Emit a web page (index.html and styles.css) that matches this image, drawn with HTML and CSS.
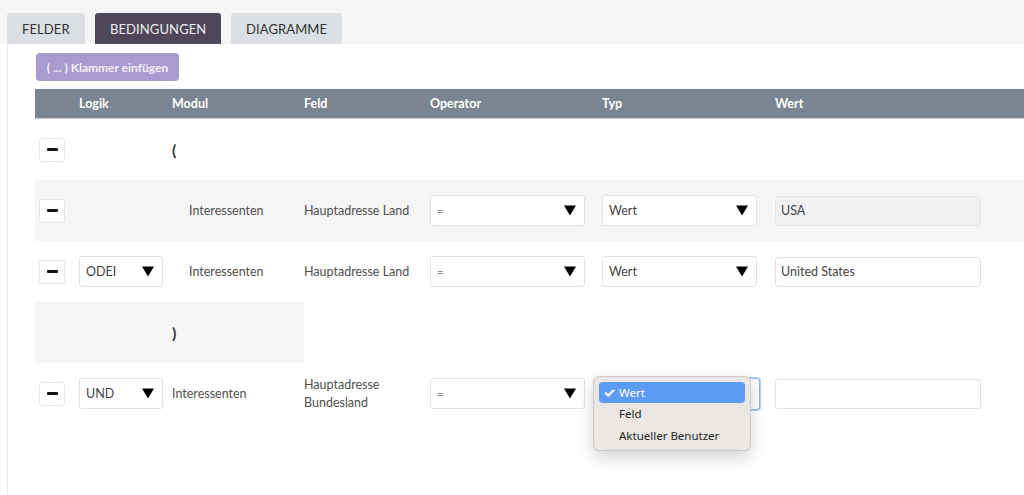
FILE: index.html
```html
<!DOCTYPE html>
<html lang="de">
<head>
<meta charset="utf-8">
<title>Bedingungen</title>
<link rel="stylesheet" href="styles.css">
</head>
<body>
<div class="page">
  <nav class="tabs">
    <div class="tab">FELDER</div>
    <div class="tab active">BEDINGUNGEN</div>
    <div class="tab">DIAGRAMME</div>
  </nav>
  <section class="panel">
    <div class="toolbar"><button class="btn-bracket">( ... ) Klammer einfügen</button></div>
    <div class="grid head">
      <div></div><div>Logik</div><div>Modul</div><div>Feld</div><div>Operator</div><div>Typ</div><div>Wert</div>
    </div>

    <div class="grid row">
      <div><span class="minus"><i></i></span></div>
      <div></div>
      <div class="paren">(</div>
      <div></div><div></div><div></div><div></div>
    </div>

    <div class="grid row shaded">
      <div><span class="minus"><i></i></span></div>
      <div></div>
      <div class="indent">Interessenten</div>
      <div>Hauptadresse Land</div>
      <div><span class="select op">=<svg class="tri" viewBox="0 0 12 10"><path d="M0 0H12L6 10Z"/></svg></span></div>
      <div><span class="select typ">Wert<svg class="tri" viewBox="0 0 12 10"><path d="M0 0H12L6 10Z"/></svg></span></div>
      <div><span class="input disabled">USA</span></div>
    </div>

    <div class="grid row">
      <div><span class="minus"><i></i></span></div>
      <div><span class="select logic">ODEI<svg class="tri" viewBox="0 0 12 10"><path d="M0 0H12L6 10Z"/></svg></span></div>
      <div class="indent">Interessenten</div>
      <div>Hauptadresse Land</div>
      <div><span class="select op">=<svg class="tri" viewBox="0 0 12 10"><path d="M0 0H12L6 10Z"/></svg></span></div>
      <div><span class="select typ">Wert<svg class="tri" viewBox="0 0 12 10"><path d="M0 0H12L6 10Z"/></svg></span></div>
      <div><span class="input">United States</span></div>
    </div>

    <div class="grid row close">
      <div class="closebg"><span></span><span></span><span class="paren">)</span></div>
    </div>

    <div class="grid row">
      <div><span class="minus"><i></i></span></div>
      <div><span class="select logic">UND<svg class="tri" viewBox="0 0 12 10"><path d="M0 0H12L6 10Z"/></svg></span></div>
      <div>Interessenten</div>
      <div class="twoline">Hauptadresse<br>Bundesland</div>
      <div><span class="select op">=<svg class="tri" viewBox="0 0 12 10"><path d="M0 0H12L6 10Z"/></svg></span></div>
      <div class="typcell">
        <span class="select typ focus"></span>
        <ul class="menu">
          <li class="sel"><span class="check">✓</span>Wert</li>
          <li>Feld</li>
          <li>Aktueller Benutzer</li>
        </ul>
      </div>
      <div><span class="input"></span></div>
    </div>
  </section>
</div>
</body>
</html>
```
FILE: styles.css
```css
* { box-sizing: border-box; }
html, body { margin: 0; padding: 0; background: #fff; }
body { font-family: Lato, "Open Sans", sans-serif; color: #505050; font-size: 12.5px; }
.page { width: 1024px; height: 495px; overflow: hidden; }

.tabs {
  display: flex; gap: 10px; padding: 13px 0 0 7px; height: 44px;
  background: #f5f5f5;
}
.tab {
  height: 31px; line-height: 32px; padding: 0 15px; background: #dcdfe3;
  color: #333; font-size: 13px; border-radius: 3px 3px 0 0; letter-spacing: 0.1px;
}
.tab:first-child { width: 78px; }
.tab:nth-child(2) { width: 126px; text-align: center; }
.tab:nth-child(3) { width: 111px; text-align: center; }
.tab.active { background: #4d4759; color: #eeedf2; }

.panel {
  margin-left: 7px; border-left: 1px solid #e6e6e6; height: 451px;
  padding-left: 27px; background: #fff;
}
.toolbar { padding: 9px 0 8px 1px; height: 45px; }
.btn-bracket {
  height: 28px; width: 143px; border: 0; border-radius: 4px; background: #a99bcf;
  color: #f3f0fa; font-family: Lato, sans-serif; font-weight: 700; font-size: 12px; padding: 0;
}

.grid {
  display: grid;
  grid-template-columns: 44px 93px 132px 126px 172px 173px 1fr;
  align-items: center;
}
.head {
  height: 30px; background: #7a8591; color: #fff; font-weight: 700; font-size: 12.5px;
  border-bottom: 1px solid #c9ced6;
}
.row { height: 61px; position: relative; }
.row.shaded { background: #f5f5f5; }
.row > div { display: flex; align-items: center; }
.row > div:first-child { padding-left: 4px; }

.minus {
  width: 26px; height: 24px; background: #fff; border: 1px solid #e6e6e6; border-radius: 3px;
  display: flex; align-items: center; justify-content: center;
}
.minus i { display: block; width: 11px; height: 3px; background: #111; border-radius: 1px; }

.paren { font-weight: 700; font-size: 16px; color: #3a3a3a; }
.indent { padding-left: 17px; }
.twoline { line-height: 18px; }

.select, .input {
  display: flex; align-items: center; height: 31px; background: #fff;
  border: 1px solid #e3e3e3; border-radius: 3px; padding: 0 8px 0 6px; color: #444; font-size: 12.5px;
}
.select { justify-content: space-between; }
.select.op { width: 155px; color: #888; font-size: 11px; }
.select.typ { width: 155px; }
.select.logic { width: 84px; }
.input { width: 206px; height: 30px; padding-left: 5px; }
.input.disabled { background: #f1f1f1; border-color: #e6e6e6; }
.tri { width: 12px; height: 11px; fill: #000; }

.row.close { display: block; }
.closebg {
  width: 269px; height: 61px; background: #f5f5f5;
  display: grid !important; grid-template-columns: 44px 93px 132px; align-items: center;
  padding-left: 0 !important;
}

.typcell { position: relative; }
.select.focus { width: 158px; height: 32px; border: 1px solid #8fb3ea; box-shadow: 0 0 0 1px #b9d0f3; }
.menu {
  position: absolute; left: -9px; top: -2px; width: 158px; margin: 0; padding: 5px 5px 4px;
  list-style: none; background: #e9e6e3; border: 1px solid #cfcbc8; border-radius: 6px;
  box-shadow: 0 6px 16px rgba(0,0,0,0.18);
  font-family: "Noto Sans", Inter, sans-serif; font-size: 11.5px; color: #262626;
}
.menu li { height: 21.5px; line-height: 21px; padding-left: 20px; position: relative; }
.menu li.sel { background: #5d9cf4; color: #fff; border-radius: 4px; }
.menu .check { position: absolute; left: 4px; top: 0; font-size: 14px; font-weight: 700; }
```
